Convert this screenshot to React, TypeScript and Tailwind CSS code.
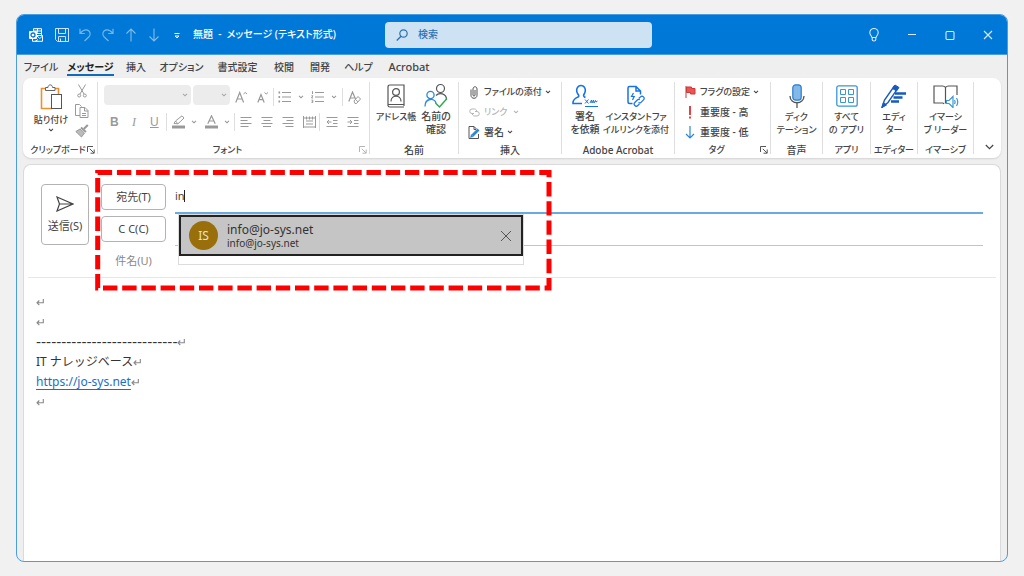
import type { ReactNode } from "react";
import { clsx } from "clsx";

type IconProps = {
  w: number;
  h: number;
  children: ReactNode;
  className?: string;
};

/** Line icon on a canvas of w × h pixels. Colour comes from the text colour. */
function Icon({ w, h, children, className }: IconProps) {
  return (
    <svg
      aria-hidden="true"
      width={w}
      height={h}
      viewBox={`0 0 ${w} ${h}`}
      fill="none"
      stroke="currentColor"
      strokeWidth="1"
      className={clsx("shrink-0", className)}
    >
      {children}
    </svg>
  );
}

function Chevron({ className }: { className?: string }) {
  return (
    <Icon w={6} h={4} className={className}>
      <path d="M1 .8 3 2.8 5 .8" strokeWidth="1.1" />
    </Icon>
  );
}

function Launcher({ className }: { className?: string }) {
  return (
    <Icon w={8} h={8} className={className}>
      <path d="M.5 6V.5H6M2.8 2.8 7 7M7.2 3.5v3.7H3.5" />
    </Icon>
  );
}

function TitleBar() {
  return (
    <header className="grid h-[39px] shrink-0 grid-cols-[368px_27%_1fr] items-center bg-[#0078d7] text-white">
      <div className="flex items-center pl-3">
        <Icon w={14} h={14} className="mr-3">
          <path d="M4.500 3V.700h8V7M8.500.700v4M4.500 3h8M8 5.500h5" />
          <path d="M8 7.500h5.500v5.800H3.500V11M8 8l2.800 2.500L13.500 8M9 11.500l-3 2" />
          <rect x="0" y="3" width="8" height="8" rx="1" fill="#fff" stroke="none" />
          <circle cx="4" cy="7" r="2" stroke="#0078d7" strokeWidth="1.3" />
        </Icon>
        <div className="flex items-center gap-[9px]">
          <button type="button" aria-label="上書き保存" className="opacity-80">
            <Icon w={14} h={14}>
              <path d="M.5.5h13v13h-11l-2-2zM3.500.5v5h7v-5M3.500 13.500v-5h7v5M5.500 10.500v3" />
            </Icon>
          </button>
          <button type="button" aria-label="元に戻す" className="opacity-45">
            <Icon w={14} h={14}>
              <path d="M2 .8v4.700h4.800M2.200 5.300C4 3 6 1.600 8.300 1.800c4 .4 5 4.800 2.500 7.200L6.500 13" strokeWidth="1.200" />
            </Icon>
          </button>
          <button type="button" aria-label="やり直し" className="opacity-45">
            <Icon w={14} h={14}>
              <path d="M12 .8v4.700H7.200M11.800 5.300C10 3 8 1.600 5.700 1.800c-4 .4-5 4.800-2.500 7.200L7.500 13" strokeWidth="1.200" />
            </Icon>
          </button>
          <button type="button" aria-label="前のアイテム" className="opacity-50">
            <Icon w={14} h={14}>
              <path d="M7 13.500V1.200M2.500 5.500 7 1l4.500 4.500" strokeWidth="1.100" />
            </Icon>
          </button>
          <button type="button" aria-label="次のアイテム" className="opacity-50">
            <Icon w={14} h={14}>
              <path d="M7 .5v12.300M2.500 8.500 7 13l4.500-4.500" strokeWidth="1.100" />
            </Icon>
          </button>
          <button type="button" aria-label="クイック アクセスのカスタマイズ">
            <Icon w={14} h={14}>
              <path d="M4.500 5.500h5M5 8l2 2 2-2z" />
            </Icon>
          </button>
        </div>
        <h1 className="ml-[9px] whitespace-pre text-[10px] font-medium">無題  -  メッセージ (テキスト形式)</h1>
      </div>
      <label className="flex h-[26px] items-center gap-[10px] rounded-sm bg-[#cde2f3] px-[11px] text-[#2a72b5]">
        <Icon w={12} h={12}>
          <path d="M.8 11.500 5 7.200" strokeWidth="1.300" />
          <circle cx="7.500" cy="4.500" r="3.700" strokeWidth="1.200" />
        </Icon>
        <input
          type="search"
          aria-label="検索"
          placeholder="検索"
          className="min-w-0 flex-1 bg-transparent text-[10px] font-medium outline-none placeholder:text-[#2a72b5]"
        />
      </label>
      <div className="flex justify-end">
        {CAPTION_BUTTONS.map(({ label, icon }) => (
          <button key={label} type="button" aria-label={label} className="flex w-[38px] justify-center opacity-85">
            {icon}
          </button>
        ))}
      </div>
    </header>
  );
}

const CAPTION_BUTTONS = [
  {
    label: "ヒント",
    icon: (
      <Icon w={10} h={14}>
        <path d="M3 9.500C2.800 8 .8 7 .8 4.700a4.200 4.200 0 0 1 8.400 0C9.200 7 7.200 8 7 9.500zM3.200 9.500v2.300c0 1.600 3.600 1.600 3.600 0V9.500" strokeWidth="1.100" />
      </Icon>
    ),
  },
  {
    label: "最小化",
    icon: (
      <Icon w={10} h={14}>
        <path d="M1 6.500h8" />
      </Icon>
    ),
  },
  {
    label: "最大化",
    icon: (
      <Icon w={10} h={14}>
        <rect x="1" y="3.500" width="8" height="8" rx="1" strokeWidth="1.100" />
      </Icon>
    ),
  },
  {
    label: "閉じる",
    icon: (
      <Icon w={10} h={14}>
        <path d="m1 3 8 8M9 3l-8 8" strokeWidth="1.100" />
      </Icon>
    ),
  },
];

const TABS = [
  { label: "ファイル", className: "w-9" },
  { label: "メッセージ", className: "w-[63px]" },
  { label: "挿入", className: "w-7" },
  { label: "オプション", className: "w-[63px]" },
  { label: "書式設定", className: "w-[49px]" },
  { label: "校閲", className: "w-11" },
  { label: "開発", className: "w-7" },
  { label: "ヘルプ", className: "w-[49px]" },
  { label: "Acrobat", className: "w-[52px] text-[11px]" },
];

function RibbonTabs() {
  return (
    <nav className="flex h-6 shrink-0 items-center border-t border-[#4a9de0] pl-[6px] text-[10px] font-medium text-[#444]">
      {TABS.map((tab) => (
        <button key={tab.label} type="button" className={clsx("flex shrink-0 justify-center", tab.className)}>
          <span
            className={clsx(
              "h-[18px] whitespace-nowrap border-b-2 leading-[18px]",
              tab.label === "メッセージ" ? "border-[#0f6cbd] font-bold text-[#222]" : "border-transparent",
            )}
          >
            {tab.label}
          </span>
        </button>
      ))}
    </nav>
  );
}

type GroupProps = {
  label: string;
  className: string;
  captionClass?: string;
  launcher?: "on" | "off";
  children: ReactNode;
};

/** One ribbon section: its tools above, its caption below, a divider at the right. */
function Group({ label, className, captionClass = "text-[10px]", launcher, children }: GroupProps) {
  return (
    <section className={clsx("relative my-1 flex shrink-0 flex-col border-r border-[#dedede]", className)}>
      <div className="flex-1">{children}</div>
      <div className={clsx("h-2 whitespace-nowrap text-center leading-2", captionClass)}>{label}</div>
      {launcher && (
        <button type="button" aria-label={`${label}の設定`} className="absolute bottom-0 right-[2px]">
          <Launcher className={launcher === "off" ? "text-[#b5b5b5]" : "text-[#555]"} />
        </button>
      )}
    </section>
  );
}

type BigButtonProps = {
  lines: string[];
  icon: ReactNode;
  className: string;
};

function BigButton({ lines, icon, className }: BigButtonProps) {
  return (
    <button type="button" className={clsx("flex flex-col items-center", className)}>
      <span className="flex h-7 items-center">{icon}</span>
      {lines.map((line) => (
        <span key={line} className="whitespace-nowrap leading-[13px]">
          {line}
        </span>
      ))}
    </button>
  );
}

type RowButtonProps = {
  icon: ReactNode;
  children: ReactNode;
  chevron?: boolean;
  className: string;
};

function RowButton({ icon, children, chevron, className }: RowButtonProps) {
  return (
    <button type="button" className={clsx("flex h-5 items-center whitespace-nowrap", className)}>
      <span className="mr-1 flex w-3 justify-center">{icon}</span>
      {children}
      {chevron && <Chevron className="ml-[3px]" />}
    </button>
  );
}

function ClipboardGroup() {
  return (
    <Group label="クリップボード" className="w-[75px]" captionClass="pr-1 text-[9px]" launcher="on">
      <div className="flex">
        <button type="button" className="ml-[10px] flex w-9 flex-col items-center text-[9px] leading-3">
          <Icon w={22} h={26} className="mb-1 mt-[2px]">
            <path d="M5 4.500H1.500v20H12M15 4.500h3.500V10" stroke="#e8912d" strokeWidth="1.600" />
            <path d="M3 6h13.500v5H12v12H3z" fill="#fbfbfb" stroke="none" />
            <path d="M5.500 6.500v-3H8c0-3.500 4.500-3.500 4.500 0H15v3z" fill="#fff" stroke="#666" />
            <rect x="11.500" y="10.500" width="10" height="14" fill="#fff" stroke="#555" />
          </Icon>
          <span className="whitespace-nowrap">貼り付け</span>
          <Chevron className="mt-[2px]" />
        </button>
        <div className="ml-[6px] mt-[2px] flex flex-col items-center gap-[6px] text-[#999]">
          <button type="button" aria-label="切り取り">
            <Icon w={10} h={14}>
              <path d="M1.500.5 7 10M8.500.5 3 10" />
              <circle cx="2.200" cy="11.500" r="1.500" />
              <circle cx="7.800" cy="11.500" r="1.500" />
            </Icon>
          </button>
          <button type="button" aria-label="コピー">
            <Icon w={14} h={14}>
              <path d="M5 11.500H.5V.5h4l2 2" />
              <path d="M5 3.500h5l3 3v7H5zM9.500 3.500V7H13M7 9.500h4M7 11.500h4" />
            </Icon>
          </button>
          <button type="button" aria-label="書式のコピー">
            <Icon w={14} h={14}>
              <path d="M12.800 1 8.800 5" strokeWidth="2" />
              <path d="m6 3.500 5 4.500" strokeWidth="1.800" />
              <path d="M5 5 .8 7.500 6.500 13 9.500 9z" fill="#bbb" />
            </Icon>
          </button>
        </div>
      </div>
    </Group>
  );
}

function FontSelect({ label, className }: { label: string; className: string }) {
  return (
    <div className={clsx("relative", className)}>
      <select aria-label={label} disabled className="h-5 w-full appearance-none rounded bg-[#ececec]" />
      <Chevron className="absolute right-[3px] top-2 text-[#aaa]" />
    </div>
  );
}

const LINES = {
  left: "M.5 1.500h11M.5 4.500h7M.5 7.500h11M.5 10.500h8",
  center: "M.5 1.500h11M2.500 4.500h7M.5 7.500h11M2 10.500h8",
  right: "M.5 1.500h11M4.500 4.500h7M.5 7.500h11M3.500 10.500h8",
  distribute: "M.5 0v12M12.500 0v12M.5 2h12M3 5h7M3 8h7M.5 11h12M3.500.5v3M6.500.5v3M9.500.5v3",
  outdent: "M.5 1.500h11M7 4.500h4.500M7 7.500h4.500M.5 10.500h11M5.500 6H1M3 4 1 6l2 2",
  indent: "M.5 1.500h11M7 4.500h4.500M7 7.500h4.500M.5 10.500h11M.5 6H5M3 4l2 2-2 2",
};

function LineTool({ label, d }: { label: string; d: string }) {
  return (
    <button type="button" aria-label={label}>
      <Icon w={13} h={12}>
        <path d={d} />
      </Icon>
    </button>
  );
}

function Divider() {
  return <span className="h-[18px] w-px bg-[#dedede]" />;
}

function FontGroup() {
  return (
    <Group label="フォント" className="w-[272px]" captionClass="pr-3 text-[9px]" launcher="off">
      <div className="flex h-[30px] items-center pl-[6px] text-[#999]">
        <FontSelect label="フォント" className="w-[87px]" />
        <FontSelect label="フォント サイズ" className="ml-[2px] w-[37px]" />
        <button type="button" aria-label="フォント サイズの拡大" className="ml-[5px]">
          <Icon w={13} h={13}>
            <path d="M.8 11.500 4.700 1.500l3.900 10M2.300 8h4.900" strokeWidth="1.200" />
            <path d="m8.500 3 1.700-1.500L12 3" />
          </Icon>
        </button>
        <button type="button" aria-label="フォント サイズの縮小" className="ml-[9px]">
          <Icon w={13} h={13}>
            <path d="m.8 11.500 3.200-8 3.200 8M2 8.700h4" strokeWidth="1.200" />
            <path d="M7.500 1.500 9.200 3 11 1.500" />
          </Icon>
        </button>
        <span className="ml-[3px] flex">
          <Divider />
        </span>
        <button type="button" aria-label="箇条書き" className="ml-1 flex items-center gap-[7px]">
          <Icon w={13} h={12}>
            <path d="M4 1.500h9M4 6h9M4 10.500h9" />
            <path d="M.5 1.500h1.600M.5 6h1.600M.5 10.500h1.600" strokeWidth="1.800" />
          </Icon>
          <Chevron />
        </button>
        <button type="button" aria-label="段落番号" className="ml-[7px] flex items-center gap-[7px]">
          <Icon w={13} h={12}>
            <path d="M4 1.500h9M4 6h9M4 10.500h9M1.500.2V3M.5 4.700h1.300L.6 7h1.500M.5 9.200h1.300v2.300H.5M.8 10.300h1" />
          </Icon>
          <Chevron />
        </button>
        <span className="ml-[5px] flex">
          <Divider />
        </span>
        <button type="button" aria-label="書式のクリア" className="ml-[5px]">
          <Icon w={13} h={13}>
            <path d="M.8 10.500 4.500 1l3 7M2.200 7h4" strokeWidth="1.200" />
            <path d="m6 10 4-4.500L12.500 8l-4 4.500H7zM7.500 8.500l2.500 2.300" />
          </Icon>
        </button>
      </div>
      <div className="flex h-5 items-center pl-3 text-[#999]">
        <div className="flex gap-3 font-['Liberation_Sans'] text-xs">
          <button type="button" aria-label="太字" className="w-2 font-bold">
            B
          </button>
          <button type="button" aria-label="斜体" className="w-2 font-['Liberation_Serif'] italic">
            I
          </button>
          <button type="button" aria-label="下線" className="w-2 underline">
            U
          </button>
        </div>
        <span className="ml-2 flex">
          <Divider />
        </span>
        <button type="button" aria-label="蛍光ペンの色" className="ml-[5px] flex items-center gap-[6px]">
          <Icon w={13} h={14}>
            <path d="M2 8.500 3.500 6 10 .8 12 3 6 8.800z M3.500 6 6 8.800" />
            <path d="M0 12h13" strokeWidth="3" />
          </Icon>
          <Chevron />
        </button>
        <button type="button" aria-label="フォントの色" className="ml-2 flex items-center gap-[6px]">
          <Icon w={13} h={14}>
            <path d="M2.800 8.800 6.500.8l3.700 8M4 6h5" strokeWidth="1.200" />
            <path d="M0 12h13" strokeWidth="3" />
          </Icon>
          <Chevron />
        </button>
        <span className="ml-1 flex">
          <Divider />
        </span>
        <div className="ml-[5px] flex gap-2">
          <LineTool label="左揃え" d={LINES.left} />
          <LineTool label="中央揃え" d={LINES.center} />
          <LineTool label="右揃え" d={LINES.right} />
          <LineTool label="均等割り付け" d={LINES.distribute} />
        </div>
        <span className="ml-[3px] flex">
          <Divider />
        </span>
        <div className="ml-[6px] flex gap-2">
          <LineTool label="インデントを減らす" d={LINES.outdent} />
          <LineTool label="インデントを増やす" d={LINES.indent} />
        </div>
      </div>
    </Group>
  );
}

function NamesGroup() {
  return (
    <Group label="名前" className="w-[89px]">
      <div className="flex pl-[7px]">
        <BigButton
          lines={["アドレス帳"]}
          className="w-[38px] text-[9px]"
          icon={
            <Icon w={18} h={24}>
              <path d="M1 22V3Q1 1 3 1h14v21M1 21.500Q1 23 3 23h14M1 20.500h16" strokeWidth="1.200" stroke="#555" />
              <circle cx="9" cy="8" r="3.400" strokeWidth="1.200" stroke="#555" />
              <path d="M4 17.500c0-7 10-7 10 0" strokeWidth="1.200" stroke="#555" />
            </Icon>
          }
        />
        <BigButton
          lines={["名前の", "確認"]}
          className="w-[42px] text-[10px]"
          icon={
            <Icon w={24} h={26}>
              <circle cx="16.500" cy="5.500" r="4" strokeWidth="1.200" stroke="#555" />
              <path d="M12 12.500c3-3.500 10.500-2 10.500 4" strokeWidth="1.200" stroke="#555" />
              <circle cx="6.500" cy="12" r="3.600" strokeWidth="1.300" stroke="#2b88d8" />
              <path d="M1 23.500c0-9 9.500-8.500 11-3.500" strokeWidth="1.300" stroke="#2b88d8" />
              <path d="m11.500 20 4 4L23 15.500" strokeWidth="1.500" stroke="#2fa84f" />
            </Icon>
          }
        />
      </div>
    </Group>
  );
}

function InsertGroup() {
  return (
    <Group label="挿入" className="w-[103px]">
      <div className="flex flex-col items-start pl-[9px]">
        <RowButton
          chevron
          className="text-[9px]"
          icon={
            <Icon w={8} h={13}>
              <path d="M1 3.500v5.800c0 4 6 4 6 0V3c0-3-4-3-4 0v6c0 1.500 2 1.500 2 0V4" stroke="#555" />
            </Icon>
          }
        >
          ファイルの添付
        </RowButton>
        <RowButton
          chevron
          className="text-[9px] text-[#b5b5b5]"
          icon={
            <Icon w={13} h={9}>
              <path d="M6 5.500H4a2.200 2.200 0 0 1 0-4.500h2.500a2.200 2.200 0 0 1 2 3" />
              <path d="M7 3.500h2a2.200 2.200 0 0 1 0 4.500H6.500a2.200 2.200 0 0 1-2-3" />
            </Icon>
          }
        >
          <span className="pr-[3px]">リンク</span>
        </RowButton>
        <RowButton
          chevron
          className="text-[10px]"
          icon={
            <Icon w={12} h={13}>
              <path d="M10.500 8v4.500H1V.5h5l2.500 2.500M6 .5V3.500h2" stroke="#555" />
              <path d="M4.500 9.500 10.500 3.500" stroke="#2b88d8" strokeWidth="2.800" />
              <path d="m2.500 11.500.8-3 2 2z" fill="#2b88d8" stroke="#2b88d8" strokeWidth=".5" />
            </Icon>
          }
        >
          署名
        </RowButton>
      </div>
    </Group>
  );
}

function AcrobatGroup() {
  return (
    <Group label="Adobe Acrobat" className="w-[113px]">
      <div className="flex gap-[2px] pl-[7px]">
        <BigButton
          lines={["署名", "を依頼"]}
          className="w-8 text-[10px]"
          icon={
            <Icon w={26} h={24} className="text-[#1473e6]">
              <path d="M10 19.500H1c-.5-4 3-5.500 5-6.500 1.500-1 .5-2-.5-3.500-2-4 0-8 3.500-8s5.500 4 3.500 8c-1 1.500-1.500 2.500 0 3.500l1 .5" strokeWidth="1.600" />
              <path d="m13 15.500 3.500 4M16.500 15.500l-3.500 4M18 19l1.500-3 .5 3 1.500-3 .5 3 1.500-2.500.5 1.500 1.500-1M13 22.500h13" strokeWidth="1" />
            </Icon>
          }
        />
        <BigButton
          lines={["インスタントファ", "イルリンクを添付"]}
          className="w-[66px] text-[9px]"
          icon={
            <Icon w={18} h={22} className="text-[#1473e6]">
              <path d="M5.500 18.500H2.500Q1 18.500 1 17V3q0-1.500 1.500-1.500H9L13.500 6v3.500M9 1.500V6h4.500" strokeWidth="1.500" />
              <path d="m6.500 8-2 3.500h2.700L5.500 15" strokeWidth="1.200" />
              <path d="m11.800 13.500 1.700-1.700c2-2 5 1 3 3l-2.500 2.500c-.8.800-1.800.8-2.500.2" strokeWidth="1.200" />
              <path d="M12.800 14.800c-.8-.7-1.800-.6-2.500.2l-2.500 2.500c-2 2 1 5 3 3l1.700-1.700" strokeWidth="1.200" />
            </Icon>
          }
        />
      </div>
    </Group>
  );
}

function TagsGroup() {
  return (
    <Group label="タグ" className="w-[96px]" captionClass="pr-3 text-[9px]" launcher="on">
      <div className="flex flex-col items-start pl-[9px]">
        <RowButton
          chevron
          className="text-[9px]"
          icon={
            <Icon w={11} h={12}>
              <path d="M1 0v12" stroke="#c63a3a" />
              <path d="M1.500 1h5v1.500H10V8H5.500V6.500h-4z" fill="#ef5350" stroke="#c63a3a" />
            </Icon>
          }
        >
          フラグの設定
        </RowButton>
        <RowButton
          className="text-[10px]"
          icon={
            <Icon w={4} h={13}>
              <path d="M2 0v9M2 10.500v2" stroke="#e04343" strokeWidth="2" />
            </Icon>
          }
        >
          重要度 - 高
        </RowButton>
        <RowButton
          className="text-[10px]"
          icon={
            <Icon w={10} h={13}>
              <path d="M5 0v12M1 8l4 4 4-4" stroke="#2b88d8" strokeWidth="1.200" />
            </Icon>
          }
        >
          重要度 - 低
        </RowButton>
      </div>
    </Group>
  );
}

function Ribbon() {
  return (
    <div className="mx-[6px] flex h-20 shrink-0 overflow-hidden rounded-lg bg-white font-medium text-[#444] shadow-[0_1px_2px_rgba(0,0,0,0.12)]">
      <ClipboardGroup />
      <FontGroup />
      <NamesGroup />
      <InsertGroup />
      <AcrobatGroup />
      <TagsGroup />
      <Group label="音声" className="w-[52px]">
        <BigButton
          lines={["ディク", "テーション"]}
          className="w-full text-[9px]"
          icon={
            <Icon w={16} h={24}>
              <rect x="3.800" y=".8" width="8.400" height="15.400" rx="3" fill="#83b9e8" stroke="#2b7cd3" strokeWidth="1.200" />
              <path d="M1 12c0 9 14 9 14 0M8 19v5" stroke="#555" strokeWidth="1.300" />
            </Icon>
          }
        />
      </Group>
      <Group label="アプリ" className="w-12" captionClass="text-[9px]">
        <BigButton
          lines={["すべて", "の アプリ"]}
          className="w-full text-[9px]"
          icon={
            <Icon w={22} h={22} className="text-[#3a96d4]">
              <rect x=".8" y=".8" width="20.400" height="20.400" rx="2" strokeWidth="1.300" />
              <path d="M4.500 4.500h5v5h-5zM12.500 4.500h5v5h-5zM4.500 12.500h5v5h-5zM12.500 12.500h5v5h-5z" />
            </Icon>
          }
        />
      </Group>
      <Group label="エディター" className="w-[47px]" captionClass="text-[9px]">
        <BigButton
          lines={["エディ", "ター"]}
          className="w-full text-[9px]"
          icon={
            <Icon w={26} h={24}>
              <path d="M14 9.500h11M12.500 13.500h9M10 17.500h8" stroke="#185abd" strokeWidth="2.600" />
              <path d="M1 23.200 3.500 16 13 2.500l3.500 2.300L7 18.500z" fill="#fff" stroke="#185abd" strokeWidth="1.400" />
              <path d="m11.500 4.500 2.500-3.500 4 2.500-2.500 3.500zM1 23.500l1.500-5L5.500 21z" fill="#185abd" stroke="#185abd" />
            </Icon>
          }
        />
      </Group>
      <Group label="イマーシブ" className="w-14" captionClass="text-[9px]">
        <BigButton
          lines={["イマーシ", "ブ リーダー"]}
          className="w-full text-[9px]"
          icon={
            <Icon w={26} h={24}>
              <path d="M12.500 19.500V3.500q-1-1.500-3-1.500H1v17h8.500q1 0 1.500 1M12.500 3.500q1-1.500 3-1.500H24v9" stroke="#555" strokeWidth="1.200" />
              <path d="M13.500 16.500h2.500l4-4v11l-4-4h-2.500z" fill="#fff" stroke="#3a96d4" strokeWidth="1.200" />
              <path d="M21.500 16q1.200 2 0 4M23.500 14q2.500 4 0 8" stroke="#3a96d4" strokeWidth="1.200" />
            </Icon>
          }
        />
      </Group>
      <div className="flex flex-1 items-end justify-center pb-2 pl-1">
        <button type="button" aria-label="リボンの表示オプション">
          <Icon w={9} h={6}>
            <path d="m.8 1 3.700 3.700L8.200 1" strokeWidth="1.200" />
          </Icon>
        </button>
      </div>
    </div>
  );
}

function Suggestion() {
  return (
    <div className="absolute left-[3px] top-[30px] w-[346px] border border-[#dcdcdc] bg-white pb-2">
      <div className="flex h-[41px] items-center border-2 border-[#222] bg-[#c5c5c5] pl-2 pr-[9px]">
        <span className="flex size-[29px] items-center justify-center rounded-full bg-[#986f0b] text-xs text-[#efe2c0]">
          IS
        </span>
        <div className="ml-[9px] flex-1 text-[#333]">
          <div className="text-xs leading-[14px]">info@jo-sys.net</div>
          <div className="text-[10px] leading-3">info@jo-sys.net</div>
        </div>
        <button type="button" aria-label="候補を削除">
          <Icon w={12} h={12} className="text-[#555]">
            <path d="m1 1 10 10M11 1 1 11" />
          </Icon>
        </button>
      </div>
    </div>
  );
}

/** Thick dashed frame that calls out the address fields. */
function Callout() {
  return (
    <svg
      aria-hidden="true"
      width="460"
      height="124"
      viewBox="0 0 460 124"
      fill="none"
      className="pointer-events-none absolute left-[65px] top-[3px] z-20"
    >
      <path d="M4.700 4.500h451.300v115.500H4.700z" stroke="#fe0000" strokeWidth="5" strokeDasharray="14.400 4.800" />
    </svg>
  );
}

function AddressForm() {
  return (
    <form className="relative mx-1 flex border-b border-[#e6e6e6] px-[13px] pb-px pt-[19px] text-[11px] text-[#444]">
      <button
        type="button"
        className="flex h-[61px] w-12 shrink-0 flex-col items-center justify-center gap-[6px] rounded border border-[#b3b3b3]"
      >
        <Icon w={18} h={16}>
          <path d="M1 1 17 8 1 15l2.500-7zM3.500 8H16" strokeWidth="1.200" />
        </Icon>
        <span className="whitespace-nowrap leading-4">送信(S)</span>
      </button>

      <div className="ml-3 min-w-0 flex-1">
        <div className="relative flex h-[30px]">
          <button type="button" className="h-[26px] w-[65px] rounded border border-[#b3b3b3]">
            宛先(T)
          </button>
          <div className="ml-[9px] flex flex-1 items-center border-b-2 border-[#6aaae0] pb-1">
            <input
              type="text"
              aria-label="宛先"
              defaultValue="in"
              className="w-[9px] bg-transparent outline-none [field-sizing:content]"
            />
            <span className="h-3 w-px bg-[#222]" />
          </div>
          <div className="absolute left-[74px] top-0 z-10">
            <Suggestion />
          </div>
        </div>
        <div className="mt-[2px] flex h-[30px]">
          <button type="button" className="h-[26px] w-[65px] rounded border border-[#b3b3b3]">
            C C(C)
          </button>
          <input
            type="text"
            aria-label="CC"
            className="ml-[9px] min-w-0 flex-1 border-b border-[#c4c4c4] bg-transparent outline-none"
          />
        </div>
        <div className="flex h-[30px] items-center">
          <label htmlFor="subject" className="w-[65px] text-center text-[#888]">
            件名(U)
          </label>
          <input id="subject" type="text" className="ml-[9px] min-w-0 flex-1 bg-transparent outline-none" />
        </div>
      </div>
      <Callout />
    </form>
  );
}

function ReturnMark() {
  return (
    <Icon w={8} h={8} className="text-[#888]">
      <path d="M7.300 1v3.800H1M3.300 2.500 1 4.800 3.300 7" strokeWidth="1.100" />
    </Icon>
  );
}

function MessageBody() {
  return (
    <div
      role="textbox"
      aria-label="本文"
      aria-multiline="true"
      className="pl-3 pt-[14px] text-xs leading-5 text-[#333] [&>p]:flex [&>p]:h-5 [&>p]:items-center"
    >
      <p>
        <ReturnMark />
      </p>
      <p>
        <ReturnMark />
      </p>
      <p className="font-['DejaVu_Sans'] text-sm">
        ----------------------------
        <ReturnMark />
      </p>
      <p className="[font-feature-settings:normal]">
        IT ナレッジベース
        <ReturnMark />
      </p>
      <p>
        <a href="https://jo-sys.net" className="text-[#1a6fc4] underline underline-offset-3">
          https://jo-sys.net
        </a>
        <ReturnMark />
      </p>
      <p>
        <ReturnMark />
      </p>
    </div>
  );
}

export default function App() {
  return (
    <div className="flex min-h-screen flex-col bg-[#f1f1f1] px-4 py-[14px] font-['Noto_Sans','Noto_Sans_CJK_JP',sans-serif] [font-feature-settings:'palt']">
      <div className="flex flex-1 flex-col overflow-hidden rounded-lg border border-[#4a9de0] bg-[#efefef]">
        <TitleBar />
        <RibbonTabs />
        <Ribbon />
        <main className="mx-[6px] mt-[6px] flex-1 rounded-t-lg border border-b-0 border-[#dadada] bg-white">
          <AddressForm />
          <MessageBody />
        </main>
      </div>
    </div>
  );
}
